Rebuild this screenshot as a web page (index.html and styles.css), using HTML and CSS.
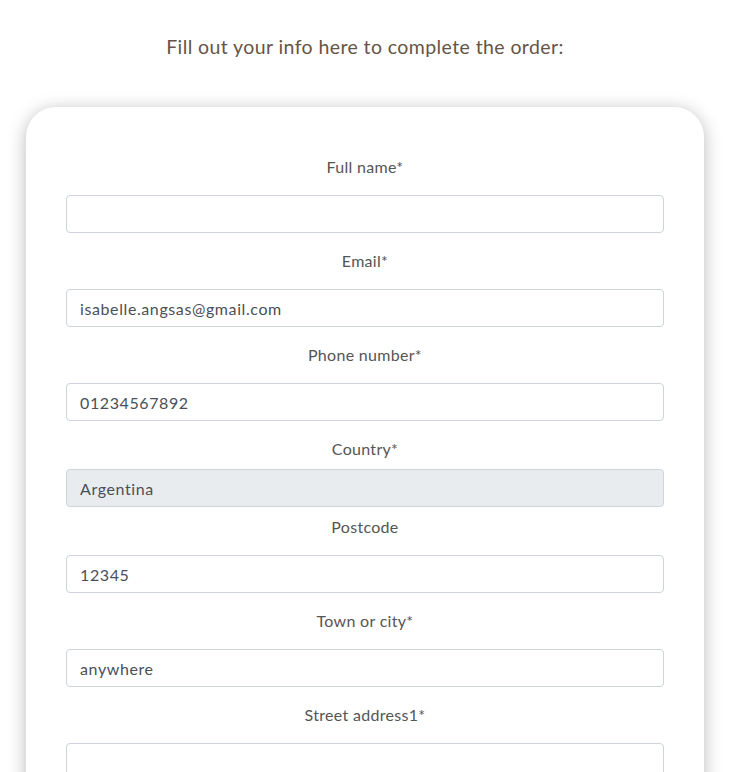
FILE: index.html
```html
<!DOCTYPE html>
<html lang="en">
<head>
<meta charset="utf-8">
<title>Checkout</title>
<link rel="stylesheet" href="styles.css">
</head>
<body>
<div class="page">
  <p class="intro">Fill out your info here to complete the order:</p>
  <form class="card">
    <div class="group">
      <label class="label" for="name">Full name*</label>
      <input class="input" id="name" type="text" value="">
    </div>
    <div class="group">
      <label class="label" for="email">Email*</label>
      <input class="input" id="email" type="text" value="isabelle.angsas@gmail.com">
    </div>
    <div class="group">
      <label class="label" for="phone">Phone number*</label>
      <input class="input" id="phone" type="text" value="01234567892">
    </div>
    <div class="group group-tight">
      <label class="label" for="country">Country*</label>
      <input class="input input-disabled" id="country" type="text" value="Argentina" disabled>
    </div>
    <div class="group">
      <label class="label" for="postcode">Postcode</label>
      <input class="input" id="postcode" type="text" value="12345">
    </div>
    <div class="group">
      <label class="label" for="town">Town or city*</label>
      <input class="input" id="town" type="text" value="anywhere">
    </div>
    <div class="group">
      <label class="label" for="street">Street address1*</label>
      <input class="input" id="street" type="text" value="">
    </div>
  </form>
</div>
</body>
</html>
```

FILE: styles.css
```css
html, body {
  margin: 0;
  padding: 0;
  background: #ffffff;
}

body {
  font-family: "Lato", "Noto Sans", sans-serif;
  overflow: hidden;
}

.page {
  width: 678px;
  margin-left: 26px;
  display: flex;
  flex-direction: column;
}

.intro {
  margin: 34px 0 0;
  text-align: center;
  font-size: 19.5px;
  line-height: 26px;
  letter-spacing: 0.4px;
  color: #665446;
}

.card {
  margin-top: 47px;
  background: #ffffff;
  border-radius: 30px;
  box-shadow: 0 3px 18px rgba(0, 0, 0, 0.28);
  padding: 48px 40px 40px;
  display: flex;
  flex-direction: column;
  min-height: 800px;
}

.group {
  display: flex;
  flex-direction: column;
  margin-bottom: 16px;
}

.label {
  text-align: center;
  font-size: 16px;
  line-height: 24px;
  letter-spacing: 0.3px;
  color: #555555;
  margin-bottom: 16px;
}

.group-tight {
  margin-bottom: 8px;
}

.group-tight .label {
  margin-bottom: 8px;
}

.input {
  box-sizing: border-box;
  height: 38px;
  width: 100%;
  border: 1px solid #ced4da;
  border-radius: 4px;
  padding: 0 13px;
  font-family: "Lato", "Noto Sans", sans-serif;
  font-size: 16px;
  letter-spacing: 0.6px;
  color: #495057;
  background: #ffffff;
  outline: none;
}

.input-disabled {
  background: #e9ecef;
  color: #495057;
  opacity: 1;
}
```
